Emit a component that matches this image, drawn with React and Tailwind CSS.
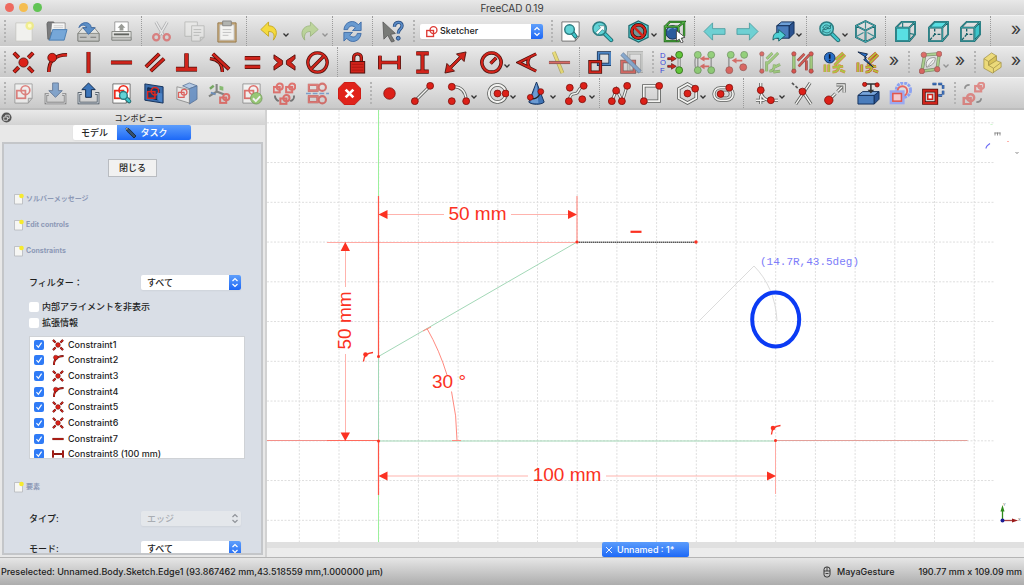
import React, { useState } from 'react';
import clsx from 'clsx';

const RED = '#d0241b';
const TEAL = '#3fc4c9';

// Outlined stroke: a dark line with a thinner coloured one on top
const Line = ({ d, w = 2.4, c = RED, o = '#4a0f0b', cap = 'butt', edge = 1.5 }) => (
  <g fill="none" strokeLinecap={cap} strokeLinejoin="miter">
    <path d={d} stroke={o} strokeWidth={w + edge} />
    <path d={d} stroke={c} strokeWidth={w} />
  </g>
);

const Dot = ({ x, y, r = 3, c = '#dc2018', o = '#7a0f0a' }) => (
  <circle cx={x} cy={y} r={r + 0.2} fill={c} stroke={o} strokeWidth="0.8" />
);

const Rail = ({ d, w = 1.5 }) => <Line d={d} w={w} c="#f4f4f2" o="#5d5f5d" edge={1.7} />;

const SketchMark = ({ s = 1, x = 0, y = 0, c = '#dd3a34', w = 1.8 }) => (
  <g transform={`translate(${x} ${y}) scale(${s})`} fill="none" stroke={c} strokeWidth={w}>
    <rect x="1" y="6" width="9" height="8" />
    <circle cx="10" cy="5.5" r="4.6" />
  </g>
);

const Page = ({ fill = '#fdfdfc' }) => (
  <path d="M3 2h18v15l-4 5H3zM21 17h-4v5" fill={fill} stroke="#666" strokeWidth="0.9" />
);

const Cube = ({ front, top, right }) => (
  <g strokeLinejoin="round">
    <path d="M2 8l14 0v14H2z" fill={front ? '#59dfe3' : 'none'} />
    <path d="M2 8l6-6h14l-6 6z" fill={top ? '#59dfe3' : 'none'} />
    <path d="M16 8l6-6v13l-6 7z" fill={right ? '#3cc5ca' : 'none'} />
    {front && <path d="M9 3v5M16 14l5 1" fill="none" stroke="#2b7f84" strokeWidth="1.3" />}
    <path d="M2 8h14v14H2zM2 8l6-6h14l-6 6M22 2v13l-6 7" fill="none" stroke="#1b5a60" strokeWidth="1.9" />
    <path d="M2 8h14v14H2zM2 8l6-6h14l-6 6M22 2v13l-6 7" fill="none" stroke="#43b4b9" strokeWidth="0.8" />
    {!front && <path d="M8 9v6h7M8 15l-5 6" fill="none" stroke="#156067" strokeWidth="1.4" strokeDasharray="3 1.5" />}
  </g>
);

const Lens = ({ x, y, r, hx, hy }) => (
  <g>
    <path d={`M${x + r * 0.6} ${y + r * 0.6}L${hx} ${hy}`} stroke="#1c5f64" strokeWidth="4.4" strokeLinecap="round" />
    <path d={`M${x + r * 0.6} ${y + r * 0.6}L${hx} ${hy}`} stroke={TEAL} strokeWidth="2.8" strokeLinecap="round" />
    <circle cx={x} cy={y} r={r} fill="#62d3d6" stroke="#2a7d82" strokeWidth="1.5" />
  </g>
);

const Arrow = ({ d }) => <path d={d} fill="#6fd0d3" stroke="#4a9da0" strokeWidth="0.9" strokeLinejoin="round" />;

const icons = {
  new: (
    <g>
      <path d="M4 3h17v19H4z" fill="#f1f1ee" stroke="#c4c4c0" strokeWidth="0.8" />
      <circle cx="18.500" cy="6" r="4.500" fill="#f1ee7a" opacity="0.8" />
      <circle cx="18.500" cy="6" r="2" fill="#fffcc0" />
    </g>
  ),
  open: (
    <g strokeLinejoin="round">
      <path d="M2 4l1-2h6l1 2h9v16H3z" fill="#7b7c7e" stroke="#5b5b5c" strokeWidth="0.8" />
      <path d="M7 3h14v10H6z" fill="#f7f7f7" stroke="#777" strokeWidth="0.7" />
      <path d="M9 6h10M9 8h10" stroke="#bbb" strokeWidth="0.7" />
      <path d="M5 20l3-10h15l-3 11H4z" fill="#76a7d8" stroke="#4478ae" strokeWidth="0.9" />
    </g>
  ),
  save: (
    <g strokeLinejoin="round">
      <path d="M1 14l5-6h12l5 6v8H1z" fill="#e3e4e2" stroke="#7b7d78" strokeWidth="0.9" />
      <path d="M1 14h22v8H1z" fill="#c3c4c2" stroke="#7b7d78" strokeWidth="0.8" />
      <path d="M14 18h6M3 18h7" stroke="#777" strokeWidth="1.2" />
      <path d="M2 8C3 2 14 0 15 8h4l-7 7-6-7h4C9 5 5 4 2 8z" fill="#5c8fc7" stroke="#33609b" strokeWidth="0.8" />
    </g>
  ),
  print: (
    <g>
      <path d="M5 2h14v10H5z" fill="#fff" stroke="#888" strokeWidth="0.8" />
      <path d="M12 4l4 4h-2v3h-4V8H8z" fill="#999b96" />
      <path d="M2 12h20v9H2z" fill="#e7e7e5" stroke="#7e807c" strokeWidth="0.9" />
      <path d="M4 14h16v2H4z" fill="#60625e" />
      <path d="M2 18h20v3H2z" fill="#c3c4c1" stroke="#7e807c" strokeWidth="0.7" />
    </g>
  ),
  cut: (
    <g fill="none">
      <path d="M6 2l8 14M18 2l-8 14" stroke="#85878a" strokeWidth="3" />
      <path d="M6 2l8 14M18 2l-8 14" stroke="#f2f2f2" strokeWidth="1.5" />
      <circle cx="6.500" cy="18" r="3.200" stroke="#dc3c3c" strokeWidth="2.400" />
      <circle cx="17.500" cy="18" r="3.200" stroke="#dc3c3c" strokeWidth="2.400" />
    </g>
  ),
  copy: (
    <g fill="#eeeeec" stroke="#9a9c98" strokeWidth="0.9">
      <path d="M2 2h13v15H2z" />
      <path d="M9 6h13v12l-4 4H9zM22 18h-4v4" />
      <path d="M11 10h8M11 13h8M11 16h6" />
    </g>
  ),
  paste: (
    <g>
      <path d="M3 3h19v20H3z" fill="#cdb184" stroke="#957848" />
      <path d="M5 5h15v16H5z" fill="#f3f3f1" stroke="#aaa" strokeWidth="0.7" />
      <path d="M8 1h9v5H8z" fill="#b2b4b0" stroke="#7a7a7a" strokeWidth="0.8" />
      <path d="M8 10h9M8 13h9M8 16h6" stroke="#bbb" strokeWidth="0.9" />
    </g>
  ),
  undo: <path d="M3 10l8-8v4c8 0 11 8 5 15 2-6 0-9-5-9v5z" fill="#f4da3e" stroke="#c2a41c" strokeWidth="0.9" strokeLinejoin="round" />,
  redo: <path d="M21 10l-8-8v4c-8 0-12 8-6 15-1-6 1-9 6-9v5z" fill="#a3cf68" stroke="#6d9838" strokeWidth="0.9" strokeLinejoin="round" />,
  refresh: (
    <g fill="#689ad0" stroke="#3a68a3" strokeWidth="0.9" strokeLinejoin="round">
      <path d="M3 10C4 1 14-1 18 5l3-3v9h-9l3-3C12 5 8 6 7 10z" />
      <path d="M21 14c-1 9-11 11-15 5l-3 3v-9h9l-3 3c3 3 7 2 8-2z" />
    </g>
  ),
  whatsthis: (
    <g>
      <path d="M2 2l13 12-5 1 4 7-3 1-4-7-4 4z" fill="#787a77" stroke="#555" strokeWidth="0.8" />
      <path d="M14 7c0-6 8-6 8-1 0 4-4 3-4 8" fill="none" stroke="#274a7c" strokeWidth="3.400" />
      <path d="M14 7c0-6 8-6 8-1 0 4-4 3-4 8" fill="none" stroke="#5a8cc8" strokeWidth="1.800" />
      <circle cx="18" cy="19" r="2" fill="#5a8cc8" stroke="#274a7c" />
    </g>
  ),
  fitAll: (
    <g>
      <Page />
      <Lens x={11} y={10} r={5} hx={17} hy={17} />
    </g>
  ),
  fitSelection: (
    <g>
      <Lens x={9} y={9} r={7} hx={21} hy={21} />
      <path d="M5 13l5-5-2-2h6v6l-2-2-5 5z" fill="#fff" stroke="#256a6d" strokeWidth="0.6" />
    </g>
  ),
  drawStyle: (
    <g>
      <path d="M12 1l10 5v12l-10 5-10-5V6z" fill="#55d6da" stroke="#1f6a6f" strokeWidth="1.300" />
      <circle cx="12" cy="12" r="7" fill="#6f9799" stroke="#2b0a08" strokeWidth="3.600" />
      <circle cx="12" cy="12" r="7" fill="none" stroke={RED} strokeWidth="2.300" />
      <path d="M7 7l10 10" stroke={RED} strokeWidth="2.600" />
    </g>
  ),
  selBox: (
    <g>
      <circle cx="10" cy="13" r="7" fill="#2c5d9c" stroke="#152f55" />
      <path d="M5 11c2-4 6-4 8-2" fill="none" stroke="#7da6d8" strokeWidth="1.500" />
      <path d="M2 7h14v15H2zM2 7l5-5h15l-6 5M22 2v14l-6 6" fill="none" stroke="#1b5514" strokeWidth="2.400" />
      <path d="M2 7h14v15H2zM2 7l5-5h15l-6 5M22 2v14l-6 6" fill="none" stroke="#55b848" strokeWidth="1.100" />
      <path d="M14 11l9 7-4 1 2 4-2 1-2-4-3 2z" fill="#fff" stroke="#333" strokeWidth="0.8" />
    </g>
  ),
  back: <Arrow d="M1 12l9-9v6h13v6H10v6z" />,
  forward: <Arrow d="M23 12l-9-9v6H1v6h13v6z" />,
  linkGo: (
    <g strokeLinejoin="round">
      <path d="M5 6l5-4h13l-5 4z" fill="#6d9fd6" stroke="#14305a" />
      <path d="M5 6h13v13H5z" fill="#4b7dbc" stroke="#14305a" />
      <path d="M18 6l5-4v12l-5 5z" fill="#2a5290" stroke="#14305a" />
      <path d="M1 21c0-7 3-8 6-8v-3l7 6-7 6v-3c-3 0-4 0-6 2z" fill="#4fd0d4" stroke="#12575c" strokeWidth="0.900" />
    </g>
  ),
  zoom: (
    <g>
      <Lens x={9} y={9} r={7} hx={21} hy={21} />
      <path d="M5 8c1-3 5-4 7-1l1-2v4H9l2-1c-2-1-4-1-4 1zM13 11c-1 3-5 3-7 1l-1 1v-3h4" fill="none" stroke="#236a6f" strokeWidth="0.900" />
    </g>
  ),
  iso: (
    <g fill="none" strokeLinejoin="round">
      <path d="M12 1l10 5v12l-10 5-10-5V6zM2 6l10 5 10-5M12 11v12" stroke="#1b5a60" strokeWidth="1.900" />
      <path d="M12 1v8M3 17l7-4M21 17l-7-4" stroke="#3a8d92" strokeWidth="1.200" />
      <path d="M12 1l10 5v12l-10 5-10-5V6zM2 6l10 5 10-5M12 11v12" stroke="#4bb9bd" strokeWidth="0.800" />
    </g>
  ),
  front: <Cube front />,
  top: <Cube top />,
  right: <Cube right />,

  coincident: (
    <g>
      <Line d="M2 2l5 5M22 2l-5 5M2 22l5-5M22 22l-5-5" w={2.8} />
      <Dot x={12} y={12} r={4.6} o="#4a0f0b" />
    </g>
  ),
  onObject: (
    <g>
      <Line d="M4 22C4 10 10 4 23 4" w={2.2} />
      <Dot x={7.5} y={7} r={4.4} o="#4a0f0b" />
    </g>
  ),
  vertical: <Line d="M12 1v22" w={2.800} />,
  horizontal: <Line d="M1 12h22" w={2.800} />,
  parallel: <Line d="M3 16.500L17 3M8 21L22 8" w={2.600} />,
  perpendicular: (
    <g>
      <Line d="M12 2.500v15" w={3.2} />
      <Line d="M1 19h22" w={3.6} />
      <path d="M12 12v6" stroke={RED} strokeWidth="3.200" />
    </g>
  ),
  tangent: (
    <g>
      <Line d="M2 8c9 1 13 6 13 14" w={2} />
      <Line d="M5 3l17 16" w={2.6} />
    </g>
  ),
  equal: <Line d="M4 7.500h16M4 16.500h16" w={3} />,
  symmetric: (
    <g fill={RED} stroke="#4a0f0b" strokeWidth="0.900">
      <path d="M1 4l9 6v4l-9 6v-4l4-4-4-4z" />
      <path d="M23 4l-9 6v4l9 6v-4l-4-4 4-4z" />
    </g>
  ),
  block: <Line d="M12 2a10 10 0 1 0 .01 0M5.500 18.500l13-13" w={2} />,
  lock: (
    <g>
      <Line d="M8 12V7a4 4 0 0 1 8 0v5" w={2} />
      <rect x="4.500" y="11" width="15" height="12" fill={RED} stroke="#4a0f0b" />
      <path d="M6 14h12M6 17h12M6 20h12" stroke="#a3140e" strokeWidth="0.700" />
    </g>
  ),
  distX: <Line d="M2 5v14M22 5v14M2 12h20" w={2.400} />,
  distY: <Line d="M5.500 2.500h13M5.500 21.500h13M12 3v18" w={2.800} />,
  distance: <path d="M1 23l2-10 3 3L16 6l-3-3 10-2-2 10-3-3L8 18l3 3z" fill={RED} stroke="#4a0f0b" strokeWidth="0.900" />,
  radius: <Line d="M12 2a10 10 0 1 0 .01 0M11 13l6-6" w={2.200} />,
  angle: <Line d="M21 3L3 12l18 9M14 7c-2 3-2 7 0 10" w={1.900} />,
  snell: (
    <g opacity="0.650">
      <Line d="M6 1l9 22" w={2.6} c="#ecd944" o="#9c8e2b" />
      <Line d="M1 12h22" w={1.8} c="#d8322a" />
    </g>
  ),
  driving: (
    <g>
      <Line d="M11 2h12v12H11z" w={1.9} c="#4f86c4" o="#11294a" />
      <Line d="M2 11h11v11H2z" w={1.9} />
    </g>
  ),
  activate: (
    <g opacity="0.600">
      <Line d="M9 2h14v19H9z" w={2} c="#b9bbb8" o="#7b7d7a" />
      <Line d="M2 11h13v11H2z" w={2} />
      <Line d="M2 3l19 19" w={3} c="#4f86c4" o="#334d70" />
    </g>
  ),
  dof: (
    <g>
      <g fontSize="8" fontFamily="Liberation Sans, sans-serif" fill="#3a46d8">
        <text x="0" y="7">D</text>
        <text x="0" y="15">O</text>
        <text x="0" y="23">F</text>
      </g>
      <path d="M20 5v14" stroke="#8d8f8c" strokeWidth="3.400" />
      <path d="M20 5v14" stroke="#d0d2cf" strokeWidth="1.600" />
      <path d="M8 7h4V5l5 3-5 3V9H8zM8 15h4v-2l5 3-5 3v-2H8z" fill={RED} stroke="#4a0f0b" strokeWidth="0.600" />
      <Dot x={20} y={4} r={3.400} c="#62c53a" o="#2a6412" />
      <Dot x={20} y={20} r={3.400} c="#62c53a" o="#2a6412" />
    </g>
  ),
  selConstraints: (
    <g opacity="0.600">
      <path d="M5 4v16M19 4v16M5 4c-4 2-4 14 0 16" stroke="#777" strokeWidth="1.600" fill="none" />
      <path d="M17 7h-5V5L7 8l5 3V9h5zM17 15h-5v-2l-5 3 5 3v-2h5z" fill={RED} />
      <Dot x={5} y={4} r={3.400} c="#62c53a" o="#2a6412" />
      <Dot x={5} y={20} r={3.400} c="#62c53a" o="#2a6412" />
      <Dot x={19} y={4} r={3.400} c="#62c53a" o="#2a6412" />
      <Dot x={19} y={20} r={3.400} c="#62c53a" o="#2a6412" />
    </g>
  ),
  selElements: (
    <g opacity="0.600">
      <path d="M4 20V8c0-2 1-4 3-4" stroke="#777" strokeWidth="1.800" fill="none" />
      <path d="M18 9h-6V7l-5 3 5 3v-2h6z" fill={RED} />
      <Dot x={6} y={4} r={3.400} c="#62c53a" o="#2a6412" />
      <Dot x={20} y={4} r={3.400} c="#62c53a" o="#2a6412" />
      <Dot x={4.500} y={20} r={3.400} />
      <Dot x={19} y={17} r={3.400} />
    </g>
  ),
  redundant: (
    <g opacity="0.600">
      <Rail d="M4 4v16" />
      <Dot x={4} y={3} r={2} />
      <Dot x={4} y={21} r={2} />
      <Line d="M9 8l6-6M10 13L21 2M9 11v10M12 21c5 0 5-4 5-7M17 17l6-3M16 22l7-1" w={2} c="#7cc146" o="#4d7d29" edge={1} />
    </g>
  ),
  conflicting: (
    <g opacity="0.700">
      <Line d="M3 4v16M21 4v16" w={1.8} c="#8dc75b" o="#4d7d29" />
      <Line d="M7 10l7-7M8 16L19 4M16 10v10" w={2} edge={0.800} />
      <Dot x={3} y={3} r={2} />
      <Dot x={3} y={21} r={2} />
      <Dot x={21} y={3} r={2} />
      <Dot x={21} y={21} r={2} />
    </g>
  ),
  showConflict: (
    <g>
      <Line d="M13 9l8-7M12 15L23 4M2 14v8M6 14v8M10 17l11-1M10 22c4 0 7-2 7-8M18 20l5 2" w={1.8} c="#a8c846" o="#e07a45" edge={1.200} />
      <circle cx="7" cy="7" r="5.500" fill="#2a70c8" stroke="#12325f" />
      <path d="M7 3.500v4.500M7 9.200v1.500" stroke="#08152c" strokeWidth="1.800" />
    </g>
  ),
  showPartial: (
    <g>
      <Line d="M13 9l8-7M12 15L23 4M2 12v10M6 14v8M10 17l11-1M10 22c4 0 7-2 7-8M18 20l5 2" w={1.8} c="#b4c23a" o="#c9492b" edge={1.200} />
      <path d="M2 1l10 2-3 4 9 10L8 9l3-2z" fill="#2a70c8" stroke="#0c1d3c" strokeWidth="0.900" />
    </g>
  ),
  polyApprox: (
    <g opacity="0.600">
      <Line d="M6 4l15-1-2 16-16 2z" w={2} c="#8dc75b" o="#43622d" />
      <path d="M8 17c-2-6 2-11 9-10 0 6-4 8-9 10z" fill="#fff" stroke="#666" />
      <path d="M9 16l6-7" stroke="#888" />
      <Dot x={5} y={4} r={2.600} />
      <Dot x={21} y={3} r={2.600} />
      <Dot x={19} y={19} r={2.600} />
      <Dot x={3} y={21} r={2.600} />
    </g>
  ),
  pad: (
    <g fill="#f0db6a" stroke="#9a8830" strokeWidth="0.800" strokeLinejoin="round" opacity="0.850">
      <path d="M3 8l8-6 5 3v5l5 2v5l-9 6-9-5z" />
      <path d="M3 8l5 3 8-6M8 11v4l5 3 8-6M13 18v5" fill="none" />
      <path d="M8 11l8-6v5l-8 5z" fill="#d9c044" />
    </g>
  ),

  newSketch: (
    <g opacity="0.550">
      <Page />
      <SketchMark x={4} y={3} />
    </g>
  ),
  importSketch: (
    <g opacity="0.600">
      <path d="M5 13H2v9h20v-9h-3" fill="none" stroke="#444" strokeWidth="2.600" />
      <path d="M5 13H2v9h20v-9h-3" fill="none" stroke="#e2e4e6" strokeWidth="1" />
      <path d="M9 1h6v8h4l-7 7-7-7h4z" fill="#4a80c0" stroke="#1c3f70" />
    </g>
  ),
  exportSketch: (
    <g>
      <path d="M5 12H2v10h20V12h-3" fill="none" stroke="#34414d" strokeWidth="2.600" />
      <path d="M5 12H2v10h20V12h-3" fill="none" stroke="#dfe4ea" strokeWidth="1.100" />
      <path d="M9 16h6V8h4l-7-7-7 7h4z" fill="#3c75ba" stroke="#10294c" />
    </g>
  ),
  viewSketch: (
    <g>
      <Page />
      <SketchMark x={4} y={3} c="#ee2a1c" />
      <Lens x={14} y={14} r={4} hx={20} hy={20} />
    </g>
  ),
  viewSection: (
    <g>
      <path d="M3 2l19 3v17L3 19z" fill="#3b6dac" stroke="#14305a" />
      <path d="M6 6l12 2v11L6 16z" fill="#1d3c6c" stroke="#0e2342" />
      <SketchMark x={5} y={5} s={0.85} c="#e0281d" w={1.8} />
      <path d="M16 11l5 1v9l-5-2z" fill="#4b83c6" />
    </g>
  ),
  mapSketch: (
    <g opacity="0.750" strokeLinejoin="round">
      <path d="M8 4l7-3 8 3-8 3z" fill="#a5c2e5" stroke="#2d4f7f" strokeWidth="0.800" />
      <path d="M15 7l8-3v14l-8 5z" fill="#4e7fbe" stroke="#2d4f7f" strokeWidth="0.800" />
      <path d="M2 5l13 3v14L2 18z" fill="#eceded" stroke="#666" strokeWidth="0.800" />
      <SketchMark x={3} y={7} s={0.65} w={2} />
    </g>
  ),
  reorient: (
    <g opacity="0.650">
      <path d="M9 2v8L1 15M9 10l8 3" fill="none" stroke="#555855" strokeWidth="2.200" />
      <path d="M2 7l4-3" stroke="#3f8a20" strokeWidth="2.600" />
      <path d="M12 4l4 1v4l-4-1z" fill="#59a838" />
      <SketchMark x={12} y={12} s={0.7} w={3} />
      <path d="M3 11l5 2" stroke="#3668a8" strokeWidth="2" />
    </g>
  ),
  validate: (
    <g opacity="0.650">
      <Page />
      <SketchMark x={4} y={3} />
      <circle cx="17" cy="17" r="6" fill="#77c043" stroke="#3f7a1a" strokeWidth="0.800" />
      <path d="M13.500 17l3 3 4.500-5" fill="none" stroke="#fff" strokeWidth="2" />
    </g>
  ),
  merge: (
    <g opacity="0.650">
      <SketchMark x={0} y={1} s={0.7} w={3} />
      <SketchMark x={13} y={1} s={0.7} w={3} />
      <SketchMark x={7} y={13} s={0.7} w={3} />
      <path d="M2 14c0 4 2 5 4 6M22 14c0 4-1 5-4 6" fill="none" stroke="#444" strokeWidth="2" />
    </g>
  ),
  mirror: (
    <g opacity="0.650">
      <Line d="M3 3h9v6H3z" w={1.600} c="#dd4a44" o="#a01f1a" edge={0.600} />
      <circle cx="17" cy="5.500" r="3.800" fill="none" stroke="#cf3a34" strokeWidth="2.200" />
      <path d="M0 12h24" stroke="#4b80c0" strokeWidth="1.800" strokeDasharray="5 2" />
      <Line d="M3 15h9v6H3z" w={1.600} c="#dd4a44" o="#a01f1a" edge={0.600} />
      <circle cx="17" cy="18.500" r="3.800" fill="none" stroke="#cf3a34" strokeWidth="2.200" />
    </g>
  ),
  stop: (
    <g>
      <path d="M7 0h10l7 7v10l-7 7H7l-7-7V7z" fill="#e0231b" stroke="#b5130d" strokeWidth="0.800" />
      <path d="M8 8l8 8M16 8l-8 8" stroke="#fff" strokeWidth="2.800" />
    </g>
  ),
  point: <Dot x={12} y={12} r={5.8} />,
  line: (
    <g>
      <Rail d="M5 19L19 5" />
      <Dot x={4} y={20} r={3.400} />
      <Dot x={20} y={4} r={3.400} />
    </g>
  ),
  arc: (
    <g>
      <Rail d="M7 5c8 0 12 5 13 13" />
      <Dot x={5} y={5} r={3.400} />
      <Dot x={5} y={20} r={3.400} />
      <Dot x={20} y={20} r={3.400} />
    </g>
  ),
  circle: (
    <g>
      <circle cx="12" cy="12" r="9" fill="none" stroke="#5d5f5d" strokeWidth="3.800" />
      <circle cx="12" cy="12" r="9" fill="none" stroke="#f2f2f0" strokeWidth="2.200" />
      <Dot x={12} y={12} r={3.400} />
      <Dot x={20.500} y={12} r={3.400} />
    </g>
  ),
  conic: (
    <g>
      <path d="M12 0l8 21c-3 3-13 3-16 0z" fill="#3f74b5" stroke="#14305a" />
      <path d="M12 1l2 21c-3 0-6 0-8-1z" fill="#6c9bd2" />
      <path d="M6 16c2 3 9 1 10-6" fill="none" stroke="#222" strokeWidth="1.400" />
      <Dot x={5.500} y={16} r={2.800} />
      <Dot x={16.500} y={10} r={2.800} />
    </g>
  ),
  bspline: (
    <g>
      <Rail d="M4 20c2-11 6-6 9-9 2-4 3-6 6-7" />
      <Dot x={5} y={6} r={3.400} />
      <Dot x={19.500} y={4} r={3.400} />
      <Dot x={4} y={20} r={3.400} />
      <Dot x={18} y={18} r={3.400} />
    </g>
  ),
  polyline: (
    <g>
      <Rail d="M4 20L9 8l6 12 5-16" />
      <Dot x={4} y={20} r={3.400} />
      <Dot x={8.500} y={9} r={3.400} />
      <Dot x={14.500} y={20} r={3.400} />
      <Dot x={20} y={4} r={3.400} />
    </g>
  ),
  rectangle: (
    <g>
      <Rail d="M4 4h16v16H4z" w={1.8} />
      <Dot x={20} y={4} r={3.400} />
      <Dot x={4} y={20} r={3.400} />
    </g>
  ),
  polygon: (
    <g>
      <Rail d="M12 2l9 5v10l-9 5-9-5V7z" w={1.8} />
      <Dot x={12} y={12} r={3.400} />
      <Dot x={20} y={7} r={3.400} />
    </g>
  ),
  slot: (
    <g>
      <rect x="2" y="6" width="20" height="13" rx="6.500" fill="none" stroke="#5d5f5d" strokeWidth="3.200" />
      <rect x="2" y="6" width="20" height="13" rx="6.500" fill="none" stroke="#f2f2f0" strokeWidth="1.700" />
      <rect x="6" y="9.500" width="12" height="6" rx="3" fill="none" stroke="#6d6f6d" />
      <Dot x={9} y={12.500} r={3.400} />
      <Dot x={18} y={6} r={3.400} />
    </g>
  ),
  fillet: (
    <g>
      <Rail d="M6 1v8M6 10c1 6 5 9 10 9h8M6 14v9M1 19h9" />
      <Dot x={6} y={8.500} r={3.400} />
      <Dot x={16.500} y={19} r={3.400} />
    </g>
  ),
  trim: (
    <g>
      <Rail d="M20 1L5 23M13 11l8 12" />
      <path d="M1 1l9 8" stroke="#555" strokeWidth="1.800" strokeDasharray="3 2" />
      <Dot x={12} y={10} r={3.400} />
    </g>
  ),
  extend: (
    <g>
      <Rail d="M8 16l4-4M14 10l6-6" />
      <Rail d="M13 3h8v8" />
      <Dot x={5} y={19} r={4.200} />
    </g>
  ),
  external: (
    <g strokeLinejoin="round">
      <path d="M1 14l5-4h17l-5 4z" fill="#79a6dc" stroke="#14305a" />
      <path d="M1 14h17v9H1z" fill="#4b7dbc" stroke="#14305a" />
      <path d="M18 14l5-4v8l-5 5z" fill="#2a5290" stroke="#14305a" />
      <path d="M8 2h13M14.500 2v7" stroke="#333" strokeWidth="1.600" />
      <path d="M11 8h7l-3.500 4z" fill="#333" />
      <Dot x={8} y={2.500} r={2} />
      <Dot x={21} y={3} r={2} />
    </g>
  ),
  carbonCopy: (
    <g fill="none">
      <circle cx="15" cy="8.500" r="7.500" stroke="#8aa2f2" strokeWidth="3" strokeDasharray="3 1" />
      <circle cx="14" cy="9.500" r="5" stroke="#e8665f" strokeWidth="2" />
      <rect x="2" y="10" width="13" height="12" fill="#f3c9cc" stroke="#9aa8f0" strokeWidth="2.600" />
      <rect x="4" y="12" width="9" height="8" stroke="#e0564e" strokeWidth="1.600" />
    </g>
  ),
  construction: (
    <g fill="none">
      <path d="M11 2h11v12h-7" stroke="#173a73" strokeWidth="2.600" strokeDasharray="4 2" />
      <path d="M11 2h11v12h-7" stroke="#4b81cf" strokeWidth="1.400" strokeDasharray="4 2" />
      <Line d="M2 9h13v13H2z" w={2.2} />
      <path d="M6 13h5v5H6z" fill="#fff" stroke={RED} strokeWidth="1.600" />
    </g>
  ),
  toolsCopy: (
    <g opacity="0.500">
      <SketchMark x={13} y={0} s={0.7} w={3.2} />
      <SketchMark x={1} y={12} s={0.8} w={3.2} />
      <path d="M3 7c0-3 2-4 5-4M15 21c3 0 5-1 5-4" fill="none" stroke="#444" strokeWidth="1.800" />
    </g>
  ),
};

const Icon = ({ name, className = 'size-[23px]' }) => (
  <svg viewBox="0 0 24 24" className={clsx('shrink-0', className)} aria-hidden="true">
    {icons[name]}
  </svg>
);

const Caret = ({ dim }) => (
  <svg viewBox="0 0 8 6" className={clsx('absolute right-0 bottom-2 w-2 h-1.5', dim && 'opacity-40')} aria-hidden="true">
    <path d="M1.500 1.500L4 4l2.500-2.500" fill="none" stroke="#333" strokeWidth="1.300" />
  </svg>
);

// A name ending in "+" is a button with a drop-down caret
const Section = ({ items, width, faded = [] }) => (
  <div className={clsx('flex shrink-0', width)}>
    {items.map((item) => {
      const menu = item.endsWith('+');
      const name = menu ? item.slice(0, -1) : item;
      return (
        <button
          key={name}
          type="button"
          aria-label={name}
          className={clsx('relative flex items-center justify-center', menu ? 'flex-6' : 'flex-5')}
        >
          <span className={clsx('flex', faded.includes(name) && 'opacity-55')}>
            <Icon name={name} />
          </span>
          {menu && <Caret dim={faded.includes(name) || name === 'polyApprox'} />}
        </button>
      );
    })}
  </div>
);

const Handle = () => <div className="ml-[3px] w-1 shrink-0 flex justify-center py-1"><div className="border-l-2 border-dotted border-[#b4b4b4]" /></div>;
const Divider = () => <div className="w-[7px] shrink-0 flex justify-center"><div className="border-l border-dotted border-[#9b9b9b]" /></div>;
const More = ({ end }) => (
  <button type="button" aria-label="More" className={clsx('shrink-0 text-[18px] leading-5 text-[#3c3c3c] pb-1', end ? 'ml-auto w-4' : 'w-5')}>»</button>
);

const Toolbar = ({ children }) => (
  <div role="toolbar" className="flex items-stretch h-[31px] overflow-hidden border-t border-[#f3f3f3] bg-linear-to-b from-[#e9e9e9] to-[#c9c9c9]">
    {children}
  </div>
);

const Steppers = ({ muted }) => (
  <svg
    viewBox="0 0 12 14"
    className={clsx('absolute right-0 inset-y-0 h-full w-3 pointer-events-none rounded-r-xs', !muted && 'bg-linear-to-b from-[#5f9ffb] to-[#1c66f5]')}
    aria-hidden="true"
  >
    <path d="M3.500 5.500L6 3l2.500 2.500M3.500 8.500L6 11l2.500-2.500" fill="none" stroke={muted ? '#8f9399' : '#fff'} strokeWidth="1.200" />
  </svg>
);

const Combo = ({ id, options, disabled, label, className }) => (
  <div className={clsx('relative shrink-0', className)}>
    <select
      id={id}
      aria-label={label}
      disabled={disabled}
      className={clsx(
        'block size-full appearance-none rounded-xs pr-3 font-medium shadow-xs',
        disabled ? 'bg-[#e4e7eb] text-[#a9adb3]' : 'bg-white text-[#222]'
      )}
    >
      {options.map((o) => <option key={o}>{o}</option>)}
    </select>
    <Steppers muted={disabled} />
  </div>
);

const Check = ({ id, checked, onChange }) => (
  <span className="relative flex size-2.5 shrink-0">
    <input
      id={id}
      type="checkbox"
      checked={checked}
      onChange={onChange}
      className="peer size-full appearance-none rounded-[2px] bg-white checked:bg-[#2f7bf6]"
    />
    <svg viewBox="0 0 10 10" className="absolute inset-0 hidden peer-checked:block pointer-events-none" aria-hidden="true">
      <path d="M2.500 5.200l1.900 2.100 3.200-4.600" fill="none" stroke="#fff" strokeWidth="1.200" />
    </svg>
  </span>
);

const TaskHeader = ({ children }) => (
  <h2 className="flex items-center gap-0.5 h-[26px] pl-2.5 text-[7px] font-bold text-[#8d99b6]">
    <svg viewBox="0 0 10 12" className="w-2.5 h-3" aria-hidden="true">
      <path d="M.5 1.500h8v9.500h-8z" fill="#f6f6f4" stroke="#b5b7bb" strokeWidth="0.800" />
      <circle cx="7.500" cy="3" r="2.300" fill="#f6ea2e" />
    </svg>
    {children}
  </h2>
);

const constraints = [
  { label: 'Constraint1', icon: 'coincident' },
  { label: 'Constraint2', icon: 'onObject' },
  { label: 'Constraint3', icon: 'coincident' },
  { label: 'Constraint4', icon: 'onObject' },
  { label: 'Constraint5', icon: 'coincident' },
  { label: 'Constraint6', icon: 'coincident' },
  { label: 'Constraint7', icon: 'horizontal' },
  { label: 'Constraint8 (100 mm)', icon: 'distX' },
];

const ConstraintList = () => {
  const [active, setActive] = useState(constraints.map(() => true));
  const toggle = (i) => setActive((list) => list.map((v, n) => (n === i ? !v : v)));

  return (
    <div className="h-[123px] overflow-hidden border border-[#cfd2d6] bg-white">
      <ul className="grid grid-rows-8 h-[125px]">
        {constraints.map((c, i) => (
          <li key={c.label} className="flex items-center pl-1">
            <Check id={`constraint-${i}`} checked={active[i]} onChange={() => toggle(i)} />
            <Icon name={c.icon} className="ml-2 size-3" />
            <label htmlFor={`constraint-${i}`} className="ml-1 text-[9px] leading-3">{c.label}</label>
          </li>
        ))}
      </ul>
    </div>
  );
};

const ComboView = () => {
  const [internal, setInternal] = useState(false);
  const [extended, setExtended] = useState(false);

  return (
    <aside className="w-[265px] shrink-0 flex flex-col bg-[#e8e8e8] overflow-hidden">
      <header className="relative h-[15px] shrink-0 flex items-center justify-center pl-3 bg-linear-to-b from-[#e9e9e9] to-[#d3d3d3] text-[8px] font-medium text-[#333]">
        <button type="button" aria-label="Float" className="absolute left-px top-0.5">
          <svg viewBox="0 0 12 12" className="size-[11px]" aria-hidden="true">
            <circle cx="6" cy="6" r="5.500" fill="#555" />
            <path d="M3 5.500h4V9H3zM5 5V3.500h4V7H7.500" fill="none" stroke="#e5e5e5" strokeWidth="0.900" />
          </svg>
        </button>
        コンボビュー
      </header>
      <div className="relative z-10 flex justify-center h-[15px] shrink-0 pr-0.5 text-[9px] leading-[15px] font-medium">
        <button type="button" className="w-11 rounded-l-xs bg-white text-[#222] shadow-xs">モデル</button>
        <button type="button" className="w-[74px] flex items-center gap-1 pl-2 rounded-r-xs bg-linear-to-b from-[#5b9cfb] to-[#1c68f7] text-white shadow-xs">
          <svg viewBox="0 0 12 12" className="size-3" aria-hidden="true">
            <path d="M1 1l3 .8 7 7.200-2 2-7.200-7z" fill="#37506a" stroke="#12202e" strokeWidth="0.800" />
            <path d="M1 1l2 .6-1.500 1.500z" fill="#e8c37a" />
          </svg>
          タスク
        </button>
      </div>
      <div className="flex-1 min-h-0 mx-0.5 my-0.5 border-2 border-[#c4c6c9] bg-[#d9dee6] overflow-hidden">
        <div className="pt-[15px] pb-[9px] flex justify-center">
          <button type="button" className="h-[18px] w-[49px] border border-[#b9bcc1] bg-[#f1f1f1] text-[9px] font-medium text-[#222]">閉じる</button>
        </div>
        <TaskHeader>ソルバーメッセージ</TaskHeader>
        <TaskHeader>Edit controls</TaskHeader>
        <TaskHeader>Constraints</TaskHeader>
        <div className="pl-[25px] pr-4 pt-[11px] text-[9px] font-medium text-[#1e1e1e]">
          <div className="flex items-center justify-between pr-1 h-[15px]">
            <label htmlFor="filter">フィルター：</label>
            <Combo id="filter" options={['すべて']} className="w-[100px] h-[15px] [&>select]:pl-1.5" />
          </div>
          <div className="pt-[9px] pb-[5px]">
            <div className="flex items-center gap-[3px] h-4">
              <Check id="internal" checked={internal} onChange={() => setInternal(!internal)} />
              <label htmlFor="internal">内部アライメントを非表示</label>
            </div>
            <div className="flex items-center gap-[3px] h-4">
              <Check id="extended" checked={extended} onChange={() => setExtended(!extended)} />
              <label htmlFor="extended">拡張情報</label>
            </div>
          </div>
          <ConstraintList />
        </div>
        <div className="pt-[15px]">
          <TaskHeader>要素</TaskHeader>
        </div>
        <div className="pl-[25px] pr-5 pt-[11px] text-[9px] font-medium text-[#1e1e1e] flex flex-col gap-[15px]">
          <div className="flex items-center justify-between h-[15px]">
            <label htmlFor="type">タイプ:</label>
            <Combo id="type" options={['エッジ']} disabled className="w-[100px] h-[15px] [&>select]:pl-1.5" />
          </div>
          <div className="flex items-center justify-between h-[15px]">
            <label htmlFor="mode">モード:</label>
            <Combo id="mode" options={['すべて']} className="w-[100px] h-[15px] [&>select]:pl-1.5" />
          </div>
        </div>
      </div>
    </aside>
  );
};

const gridX = Array.from({ length: 18 }, (_, i) => 299.3 + i * 39.7);
const gridY = Array.from({ length: 11 }, (_, i) => 122.8 + i * 39.75);

const SketchView = () => (
  <svg viewBox="267 110 757 432" preserveAspectRatio="xMidYMid slice" className="size-full bg-white" role="img" aria-label="Sketch">
    <g stroke="#dedede" strokeWidth="1" strokeDasharray="2 1.500">
      {gridX.map((x) => <path key={x} d={`M${x} 110V542`} />)}
      {gridY.map((y) => <path key={y} d={`M267 ${y}H994`} />)}
    </g>

    <g fill="none" strokeWidth="1">
      <path d="M378.500 110v86M378.500 494v48" stroke="#9cf09c" />
      <path d="M378.500 357v84M378.500 441h397M378.500 356.500L577 242" stroke="#a3d8b7" />
      <path d="M775.500 440.500h192" stroke="#e3a09a" />
      <path d="M267 440.500h60" stroke="#f3908a" />
      <path d="M327 440.500h51.500" stroke="#ff6a5c" />
      <path d="M327 242.500h250" stroke="#ffaaa4" />
      <path d="M577 196v46" stroke="#ff7a70" />
      <path d="M775.500 441v53" stroke="#ffaaa4" />
      <path d="M387 214.500h57M511 214.500h58M345.500 250v37M345.500 354v79M387 476h141M606 476h162" stroke="#ffb3ad" />
      <path d="M427 328.500a225 225 0 0 1 20 46.500M451.500 391.500a225 225 0 0 1 5.500 49M423 331l8-4M452 440.500h9" stroke="#ff8a80" />
      <path d="M378.500 196v161M378.500 441v54" stroke="#ff5446" strokeWidth="1.200" />
      <path d="M577 242.200h119" stroke="#111" strokeDasharray="1.500 0.500" />
      <path d="M698 322l56-56c13 13 22 32 23 55" stroke="#dcdcdc" />
    </g>

    <g fill="#fb3122">
      <path d="M378.500 214.500l9-4.500v9zM577 214.500l-9-4.500v9zM378.500 476l9-4.500v9zM776 476l-9-4.500v9zM345.300 242l-4.700 9h9.400zM345.300 441l-4.700-8.500h9.400z" />
      <path d="M630.500 230.700h11v2.200h-11z" />
      <circle cx="696" cy="242" r="1.700" />
      <circle cx="577" cy="242" r="1.600" />
      <circle cx="378.500" cy="356.500" r="1.500" />
      <circle cx="378.500" cy="441" r="1.500" />
      <circle cx="775.500" cy="440.500" r="1.500" />
      <circle cx="365.500" cy="354.500" r="2.300" />
      <circle cx="773" cy="428" r="2.300" />
    </g>
    <g fill="none" stroke="#fb3122" strokeWidth="1.300">
      <path d="M363.500 361.500c0-6 3-8.500 9.500-9" />
      <path d="M771.500 434.500c0-6 3-8.500 9-9" />
    </g>

    <g fill="#fb3122" fontFamily="Liberation Sans, sans-serif" fontSize="19" textAnchor="middle">
      <text x="477.500" y="220">50 mm</text>
      <text x="567" y="481">100 mm</text>
      <text x="449" y="388">30 °</text>
      <text transform="translate(351 320.500) rotate(-90)">50 mm</text>
    </g>

    <text x="760" y="265" fontSize="11" fontFamily="Liberation Mono, monospace" fill="#7c7cf9">(14.7R,43.5deg)</text>
    <ellipse cx="775.700" cy="319.500" rx="23.500" ry="27" fill="none" stroke="#0b3bf4" strokeWidth="4" />

    {/* what is left of the navigation cube */}
    <path d="M995 132.500v3M997.500 132.500v3M1000 132.500v3M994.500 133h6" stroke="#777" strokeWidth="0.800" />
    <path d="M986 148.500c0-2 1-3 4-5" fill="none" stroke="#6a6af5" strokeWidth="1.200" />
    <path d="M1015 152.500h4M1016 153.500h2" stroke="#b5b5b5" strokeWidth="0.800" />
    <path d="M1007 141.500h2" stroke="#ffb3ad" />
    <path d="M990.500 124l1 1 1-1" fill="none" stroke="#b7f3b7" strokeWidth="0.800" />

    <path d="M1002.500 520v-9" stroke="#2e8a1c" strokeWidth="1.300" />
    <path d="M1002.500 505l2 6.500h-4z" fill="#2e8a1c" />
    <path d="M1002.500 520.500h10" stroke="#a84040" strokeWidth="1.300" />
    <path d="M1018 520.500l-6-2v4z" fill="#9c1c1c" />
    <circle cx="1002.500" cy="520.500" r="2" fill="#1c1c96" />
    <g fontSize="4" fontFamily="Liberation Sans, sans-serif" fill="#555">
      <text x="1003" y="506">Y</text>
      <text x="1018" y="521">X</text>
    </g>
  </svg>
);

const App = () => (
  <div className="flex flex-col h-screen overflow-hidden bg-[#e8e8e8] font-['Inter','Noto_Sans_CJK_JP',sans-serif] text-[#1c1c1c]">
    <header className="relative h-[15px] shrink-0 flex items-center justify-center bg-linear-to-b from-[#e8e8e8] to-[#d3d3d3]">
      <div className="absolute left-[5px] flex gap-[5px]">
        <button type="button" aria-label="Close" className="size-[9px] rounded-full bg-[#ee6a5f]" />
        <button type="button" aria-label="Minimize" className="size-[9px] rounded-full bg-[#f5bd4f]" />
        <button type="button" aria-label="Zoom" className="size-[9px] rounded-full bg-[#61c454]" />
      </div>
      <h1 className="text-[10px] leading-3 text-[#3a3a3a]">FreeCAD 0.19</h1>
    </header>

    <div className="shrink-0 border-b-2 border-[#bdbdbd]">
      <Toolbar>
        <Handle />
        <Section width="w-[131px]" items={['new', 'open', 'save', 'print']} />
        <Divider />
        <Section width="w-[98px]" items={['cut', 'copy', 'paste']} faded={['cut', 'copy']} />
        <Divider />
        <Section width="w-[79px]" items={['undo+', 'redo+']} faded={['redo']} />
        <Divider />
        <Section width="w-[33px]" items={['refresh']} />
        <Divider />
        <Section width="w-[33px]" items={['whatsthis']} />
        <Handle />
        <div className="relative mx-1 self-center">
          <Combo label="Workbench" options={['Sketcher']} className="w-[123px] h-[15px] text-[9px] [&>select]:pl-5" />
          <svg viewBox="0 0 16 16" className="absolute left-1.5 top-0.5 size-3 pointer-events-none" aria-hidden="true">
            <SketchMark />
          </svg>
        </div>
        <Handle />
        <Section width="w-[137px]" items={['fitAll', 'fitSelection', 'drawStyle+', 'selBox']} />
        <Divider />
        <Section width="w-[105px]" items={['back', 'forward', 'linkGo+']} />
        <Divider />
        <Section width="w-[72px]" items={['zoom+', 'iso']} />
        <Divider />
        <Section width="w-[98px]" items={['front', 'top', 'right']} />
        <Divider />
        <More end />
      </Toolbar>
      <Toolbar>
        <Handle />
        <Section
          width="w-[327px]"
          items={['coincident', 'onObject', 'vertical', 'horizontal', 'parallel', 'perpendicular', 'tangent', 'equal', 'symmetric', 'block']}
        />
        <Divider />
        <Section width="w-[235px]" items={['lock', 'distX', 'distY', 'distance', 'radius+', 'angle', 'snell']} />
        <Divider />
        <Section width="w-[65px]" items={['driving', 'activate']} />
        <Handle />
        <Section
          width="w-[229px]"
          items={['dof', 'selConstraints', 'selElements', 'redundant', 'conflicting', 'showConflict', 'showPartial']}
        />
        <More />
        <Handle />
        <Section width="w-[39px]" items={['polyApprox+']} />
        <More />
        <Handle />
        <Section width="w-[31px]" items={['pad']} />
        <More end />
      </Toolbar>
      <Toolbar>
        <Handle />
        <Section
          width="w-[359px]"
          items={['newSketch', 'importSketch', 'exportSketch', 'viewSketch', 'viewSection', 'mapSketch', 'reorient', 'validate', 'merge', 'mirror', 'stop']}
        />
        <Handle />
        <Section width="w-[223px]" items={['point', 'line', 'arc+', 'circle+', 'conic+', 'bspline+']} />
        <Divider />
        <Section width="w-[137px]" items={['polyline', 'rectangle', 'polygon+', 'slot']} />
        <Divider />
        <Section width="w-[203px]" items={['fillet+', 'trim', 'extend', 'external', 'carbonCopy', 'construction']} />
        <Handle />
        <Section width="w-[33px]" items={['toolsCopy']} />
      </Toolbar>
    </div>

    <div className="flex flex-1 min-h-0">
      <ComboView />
      <main className="flex-1 min-w-0 flex flex-col border-l-2 border-[#d2d2d2]">
        <div className="flex-1 min-h-0">
          <SketchView />
        </div>
        <div className="h-[15px] shrink-0 flex justify-center bg-linear-to-b from-[#e0e0e0] from-40% to-[#ececec] to-40%">
          <button
            type="button"
            className="w-[87px] flex items-center gap-1 px-[3px] rounded-xs bg-linear-to-b from-[#5b9cfb] to-[#1c68f7] text-[9px] leading-[14px] font-medium text-white"
          >
            <svg viewBox="0 0 8 8" className="size-2" aria-hidden="true">
              <path d="M1 1l6 6M7 1L1 7" stroke="#fff" strokeWidth="0.900" />
            </svg>
            Unnamed : 1*
          </button>
        </div>
      </main>
    </div>

    <footer className="h-7 shrink-0 flex items-center pl-px pr-0.5 border-t border-[#b5b5b5] bg-linear-to-b from-[#e6e6e6] to-[#adadad] text-[9px] font-medium">
      <span>Preselected: Unnamed.Body.Sketch.Edge1 (93.867462 mm,43.518559 mm,1.000000 µm)</span>
      <button type="button" className="ml-auto mr-6 flex items-center gap-1.5">
        <svg viewBox="0 0 8 12" className="w-2 h-3" aria-hidden="true">
          <rect x="1" y="1" width="6" height="10" rx="2.500" fill="none" stroke="#333" />
          <path d="M1 5h6M4 1v4M2.500 7.500h3" stroke="#333" strokeWidth="0.900" />
        </svg>
        MayaGesture
      </button>
      <span>190.77 mm x 109.09 mm</span>
    </footer>
  </div>
);

export default App;
